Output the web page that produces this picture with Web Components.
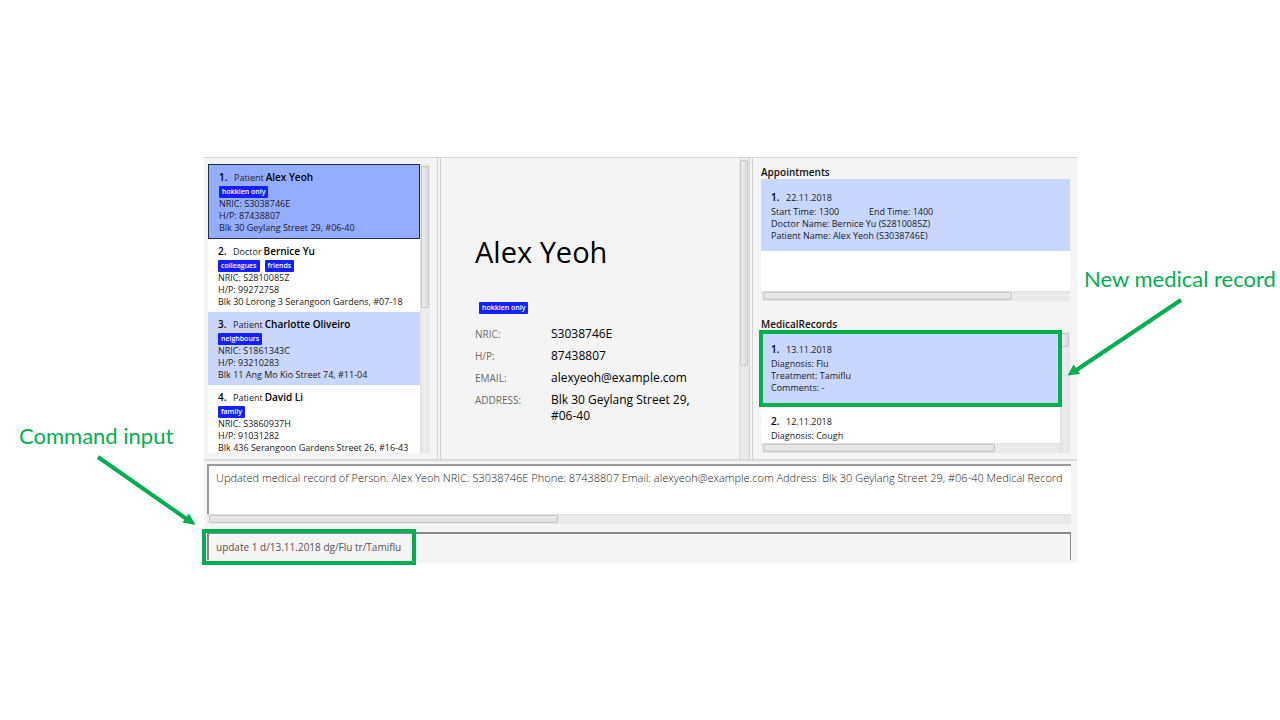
<!DOCTYPE html>
<html lang="en">
<head>
<meta charset="utf-8">
<meta name="viewport" content="width=device-width, initial-scale=1">
<title>Clinic records: update command</title>
<style>
  body {
    margin: 0;
    background: #fff;
    color: #1a1a1a;
    font-family: "Open Sans", "Noto Sans", sans-serif;
    --panel: #f4f4f4;
    --stripe: #c9d6ff;
    --picked: #93aeff;
    --tag: #1420ff;
    --accent: #00b050;
  }
</style>
</head>
<body>
<guide-page></guide-page>

<script>
const define = (name, html, setup) => {
  const template = document.createElement('template');
  template.innerHTML = html;
  customElements.define(name, class extends HTMLElement {
    connectedCallback() {
      if (this.shadowRoot) return;
      const root = this.attachShadow({ mode: 'open' });
      root.append(template.content.cloneNode(true));
      if (setup) setup(this, root);
    }
  });
};

/* Copies attributes of the host into the elements marked with data-text. */
const fill = (host, root) => {
  for (const el of root.querySelectorAll('[data-text]')) {
    el.textContent = host.getAttribute(el.dataset.text) || '';
  }
};

define('tag-chip', `
  <style>
    :host {
      display: inline-block; box-sizing: border-box; height: 12px; padding: 0 3px;
      border-radius: 1px; background: var(--tag); color: #fff;
      font-size: 7px; font-weight: 600; line-height: 12px; white-space: nowrap;
    }
  </style>
  <slot></slot>`);

/* Scroll bar; --start and --size give the thumb's offset and length. */
define('scroll-bar', `
  <style>
    :host {
      display: flex; box-sizing: border-box; width: 10px; padding: var(--start, 2px) 1px 0;
      background: linear-gradient(90deg, #e2e2e2, #ececec 40%, #e8e8e8);
    }
    i {
      box-sizing: border-box; width: 100%; height: var(--size, 50%);
      border: 1px solid #c4c4c4; border-radius: 2px;
      background: linear-gradient(90deg, #ebebeb, #dedede);
    }
    :host([horizontal]) {
      width: auto; height: 10px; padding: 1px 0 1px var(--start, 2px);
      background: linear-gradient(#e2e2e2, #ececec 40%, #e8e8e8);
    }
    :host([horizontal]) i { width: var(--size, 50%); height: 100%; background: linear-gradient(#ebebeb, #dedede); }
  </style>
  <i></i>`);

define('person-card', `
  <style>
    :host {
      display: block; padding: 5px 10px 4px; background: #fff;
      font-size: 9px; line-height: 12px; white-space: nowrap;
    }
    :host([striped]) { background: var(--stripe); }
    :host([selected]) { background: var(--picked); border: 1px solid #222c4a; }
    h3 { display: flex; margin: 0 0 1px; font-size: 10px; font-weight: 600; line-height: 15px; color: #000; }
    h3 span:first-child { width: 15px; }
    .kind { margin-right: 2px; font-size: 9px; font-weight: 400; color: #222; }
    .tags { display: flex; gap: 5px; height: 12px; }
    p { margin: 0; }
  </style>
  <h3><span data-text="index"></span><span class="kind" data-text="kind"></span><span data-text="name"></span></h3>
  <div class="tags"><slot></slot></div>
  <p data-text="nric"></p>
  <p data-text="phone"></p>
  <p data-text="address"></p>`, fill);

define('person-list', `
  <style>
    :host { display: flex; box-sizing: border-box; padding: 6px 7px 6px 4px; }
    .rows { flex: 1; min-width: 0; overflow: hidden; contain: size; background: #fff; }
    scroll-bar { --size: 142px; }
  </style>
  <div class="rows">
    <person-card selected index="1." kind="Patient" name="Alex Yeoh" nric="NRIC: S3038746E" phone="H/P: 87438807" address="Blk 30 Geylang Street 29, #06-40"><tag-chip>hokkien only</tag-chip></person-card>
    <person-card index="2." kind="Doctor" name="Bernice Yu" nric="NRIC: S2810085Z" phone="H/P: 99272758" address="Blk 30 Lorong 3 Serangoon Gardens, #07-18"><tag-chip>colleagues</tag-chip><tag-chip>friends</tag-chip></person-card>
    <person-card striped index="3." kind="Patient" name="Charlotte Oliveiro" nric="NRIC: S1861343C" phone="H/P: 93210283" address="Blk 11 Ang Mo Kio Street 74, #11-04"><tag-chip>neighbours</tag-chip></person-card>
    <person-card index="4." kind="Patient" name="David Li" nric="NRIC: S3860937H" phone="H/P: 91031282" address="Blk 436 Serangoon Gardens Street 26, #16-43"><tag-chip>family</tag-chip></person-card>
  </div>
  <scroll-bar></scroll-bar>`);

define('person-details', `
  <style>
    :host { display: flex; color: #111; }
    section { flex: 1; min-width: 0; padding: 74px 0 0 34px; }
    h1 { margin: 0 0 30px; font-size: 29px; font-weight: 400; line-height: 40px; color: #000; }
    tag-chip { display: block; width: max-content; margin: 0 0 8px 4px; }
    dl { display: grid; grid-template-columns: 76px minmax(0, 152px); row-gap: 6px; margin: 0; padding-top: 4px; line-height: 16px; }
    dt { font-size: 10px; font-weight: 400; color: #6a6a6a; }
    dd { margin: 0; font-size: 12px; color: #000; }
    scroll-bar { --size: 206px; }
  </style>
  <section>
    <h1>Alex Yeoh</h1>
    <tag-chip>hokkien only</tag-chip>
    <dl>
      <dt>NRIC:</dt><dd>S3038746E</dd>
      <dt>H/P:</dt><dd>87438807</dd>
      <dt>EMAIL:</dt><dd>alexyeoh@example.com</dd>
      <dt>ADDRESS:</dt><dd>Blk 30 Geylang Street 29, #06-40</dd>
    </dl>
  </section>
  <scroll-bar></scroll-bar>`);

define('entry-card', `
  <style>
    :host { display: block; padding: 11px 10px 9px; background: #fff; font-size: 9px; line-height: 12px; }
    :host([striped]) { background: var(--stripe); }
    h3 { display: flex; margin: 0 0 1px; font-size: 10px; font-weight: 600; line-height: 15px; color: #000; }
    h3 span { width: 15px; }
    time { font-size: 9px; font-weight: 400; color: #222; }
    ::slotted(p) { margin: 0; }
  </style>
  <h3><span data-text="index"></span><time data-text="date"></time></h3>
  <slot></slot>`, fill);

/* Titled list with its scroll bars; "highlighted" frames the first entry. */
define('entry-list', `
  <style>
    :host { display: block; }
    h2 { margin: 0; font-size: 10px; font-weight: 600; line-height: 14px; color: #111; }
    .frame { position: relative; display: grid; grid-template-columns: minmax(0, 1fr) auto; }
    .rows { height: 112px; overflow: hidden; background: #fff; }
    .base { grid-row: 2; grid-column: 1; }
    .side { display: none; grid-row: 1 / 3; grid-column: 2; --size: 14px; }
    :host([tall]) .side { display: flex; }
    mark { display: none; }
    :host([highlighted]) mark {
      display: block; position: absolute; inset: -1px 8px auto -2px; box-sizing: border-box;
      height: 77px; border: 4px solid var(--accent); background: none;
    }
  </style>
  <h2 data-text="heading"></h2>
  <div class="frame">
    <div class="rows"><slot></slot></div>
    <scroll-bar class="side"></scroll-bar>
    <scroll-bar class="base" horizontal></scroll-bar>
    <mark></mark>
  </div>`, fill);

define('history-panel', `
  <style>
    :host { display: flex; flex-direction: column; gap: 16px; padding: 7px 7px 6px 8px; }
    .times { display: grid; grid-template-columns: 98px 1fr; }
    p { margin: 0; }
    entry-list { --size: 81%; }
    entry-list[tall] { --size: 78%; }
  </style>
  <entry-list heading="Appointments">
    <entry-card striped index="1." date="22.11.2018">
      <p class="times"><span>Start Time: 1300</span><span>End Time: 1400</span></p>
      <p>Doctor Name: Bernice Yu (S2810085Z)</p>
      <p>Patient Name: Alex Yeoh (S3038746E)</p>
    </entry-card>
  </entry-list>
  <entry-list heading="MedicalRecords" tall highlighted>
    <entry-card striped index="1." date="13.11.2018">
      <p>Diagnosis: Flu</p>
      <p>Treatment: Tamiflu</p>
      <p>Comments: -</p>
    </entry-card>
    <entry-card index="2." date="12.11.2018">
      <p>Diagnosis: Cough</p>
    </entry-card>
  </entry-list>`);

define('result-display', `
  <style>
    :host { display: block; --size: 349px; }
    textarea {
      display: block; box-sizing: border-box; width: 100%; height: 50px; margin: 0; padding: 4px 0 0 7px;
      border: solid #999; border-width: 2px 0 0 2px; border-radius: 0; outline: 0; resize: none;
      overflow: hidden; white-space: pre; background: #fff; color: #222;
      font: 300 11px/16px "Open Sans", "Noto Sans", sans-serif;
    }
  </style>
  <textarea readonly aria-label="Result">Updated medical record of Person: Alex Yeoh NRIC: S3038746E Phone: 87438807 Email: alexyeoh@example.com Address: Blk 30 Geylang Street 29, #06-40 Medical Record</textarea>
  <scroll-bar horizontal></scroll-bar>`);

define('command-box', `
  <style>
    :host { display: block; position: relative; }
    input {
      display: block; box-sizing: border-box; width: 100%; height: 28px; margin: 0; padding: 0 7px;
      border: solid #888; border-width: 2px 1px 0 2px; border-radius: 0; outline: 0;
      background: var(--panel); color: #555;
      font: 400 10px/16px "Open Sans", "Noto Sans", sans-serif;
    }
    mark {
      position: absolute; inset: -3px auto -5px -5px; box-sizing: border-box; width: 214px;
      border: 4px solid var(--accent); background: none; pointer-events: none;
    }
  </style>
  <input type="text" aria-label="Command" value="update 1 d/13.11.2018 dg/Flu tr/Tamiflu">
  <mark></mark>`);

define('records-app', `
  <style>
    :host { display: block; background: var(--panel); border-top: 1px solid #d4d4d4; }
    .panes {
      display: grid; grid-template-columns: 233fr 4px 308fr 4px 324fr;
      border-bottom: 2px solid #dcdcdc;
    }
    .divider { border: solid #d2d2d2; border-width: 0 1px; }
    footer { display: flex; flex-direction: column; gap: 8px; padding: 3px 6px 3px 3px; }
  </style>
  <div class="panes">
    <person-list></person-list>
    <div class="divider"></div>
    <person-details></person-details>
    <div class="divider"></div>
    <history-panel></history-panel>
  </div>
  <footer>
    <result-display></result-display>
    <command-box></command-box>
  </footer>`);

define('call-out', `
  <style>
    :host { display: block; position: relative; z-index: 1; color: var(--accent); }
    p { margin: 0; font: 400 22px/28px Lato, "Open Sans", sans-serif; white-space: nowrap; }
    ::slotted(svg) { display: block; overflow: visible; stroke: currentColor; fill: currentColor; }
  </style>
  <p data-text="label"></p>
  <slot></slot>`, fill);

define('guide-page', `
  <style>
    :host {
      display: grid; grid-template-columns: 204px minmax(0, 1fr) 203px;
      align-content: center; min-height: 100vh;
    }
    .input { padding: 265px 0 0 19px; }
    .record { padding: 108px 0 0 7px; }
  </style>
  <call-out class="input" label="Command input">
    <svg width="185" height="80" viewBox="19 450 185 80" aria-hidden="true">
      <path d="M98 457 188 520" stroke-width="4"/>
      <path d="M195.500 525 189 513.500 182.500 522.500Z" stroke="none"/>
    </svg>
  </call-out>
  <records-app></records-app>
  <call-out class="record" label="New medical record">
    <svg width="190" height="90" viewBox="1084 293 190 90" aria-hidden="true">
      <path d="M1181 300 1075 371" stroke-width="4"/>
      <path d="M1067.500 375.500 1073.500 364.500 1080 374Z" stroke="none"/>
    </svg>
  </call-out>`);
</script>
</body>
</html>
